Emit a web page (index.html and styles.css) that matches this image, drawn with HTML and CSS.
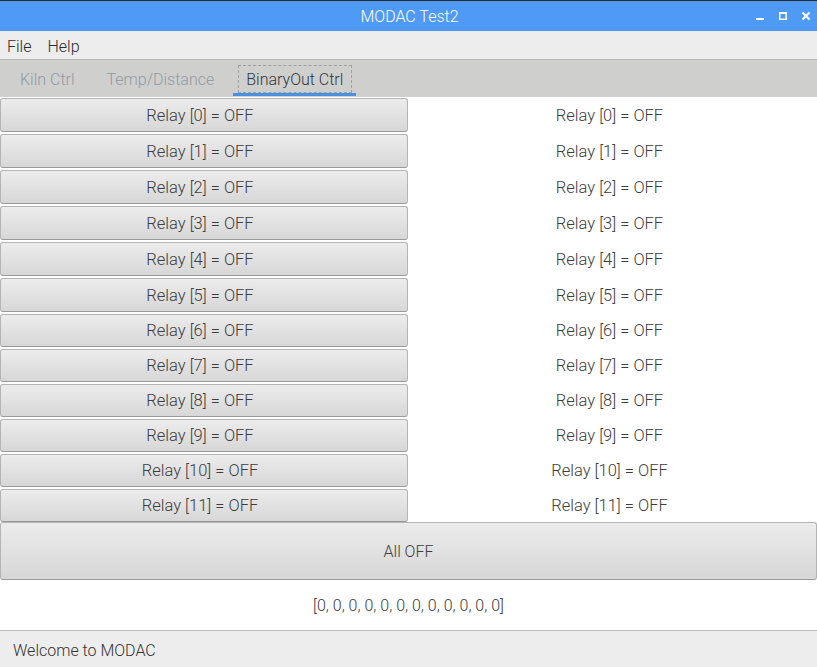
FILE: index.html
```html
<!DOCTYPE html>
<html>
<head>
<meta charset="utf-8">
<link rel="stylesheet" href="styles.css">
</head>
<body>
<div class="window">
  <div class="titlebar">
    <span class="title">MODAC Test2</span>
    <div class="controls">
      <svg class="ctl" width="10" height="10" viewBox="0 0 10 10"><rect x="1" y="7" width="8" height="2" fill="#fff"/></svg>
      <svg class="ctl" width="10" height="10" viewBox="0 0 10 10"><rect x="1.75" y="1.75" width="6.5" height="6.5" fill="none" stroke="#fff" stroke-width="1.5"/><rect x="1" y="1" width="8" height="2" fill="#fff"/></svg>
      <svg class="ctl" width="10" height="10" viewBox="0 0 10 10"><path d="M1.5 1.5 L8.5 8.5 M8.5 1.5 L1.5 8.5" stroke="#fff" stroke-width="2"/></svg>
    </div>
  </div>
  <div class="menubar">
    <span class="menu-item">File</span>
    <span class="menu-item">Help</span>
  </div>
  <div class="tabbar">
    <span class="tab">Kiln Ctrl</span>
    <span class="tab">Temp/Distance</span>
    <span class="tab active"><span class="focus">BinaryOut Ctrl</span></span>
  </div>
  <div class="grid">
    <div class="row tall"><button class="btn">Relay [0] = OFF</button><span class="lbl">Relay [0] = OFF</span></div>
    <div class="row tall"><button class="btn">Relay [1] = OFF</button><span class="lbl">Relay [1] = OFF</span></div>
    <div class="row tall"><button class="btn">Relay [2] = OFF</button><span class="lbl">Relay [2] = OFF</span></div>
    <div class="row tall"><button class="btn">Relay [3] = OFF</button><span class="lbl">Relay [3] = OFF</span></div>
    <div class="row tall"><button class="btn">Relay [4] = OFF</button><span class="lbl">Relay [4] = OFF</span></div>
    <div class="row tall"><button class="btn">Relay [5] = OFF</button><span class="lbl">Relay [5] = OFF</span></div>
    <div class="row"><button class="btn">Relay [6] = OFF</button><span class="lbl">Relay [6] = OFF</span></div>
    <div class="row"><button class="btn">Relay [7] = OFF</button><span class="lbl">Relay [7] = OFF</span></div>
    <div class="row"><button class="btn">Relay [8] = OFF</button><span class="lbl">Relay [8] = OFF</span></div>
    <div class="row"><button class="btn">Relay [9] = OFF</button><span class="lbl">Relay [9] = OFF</span></div>
    <div class="row"><button class="btn">Relay [10] = OFF</button><span class="lbl">Relay [10] = OFF</span></div>
    <div class="row last"><button class="btn">Relay [11] = OFF</button><span class="lbl">Relay [11] = OFF</span></div>
  </div>
  <button class="btn alloff">All OFF</button>
  <div class="array">[0, 0, 0, 0, 0, 0, 0, 0, 0, 0, 0, 0]</div>
  <div class="status">Welcome to MODAC</div>
</div>
</body>
</html>
```

FILE: styles.css
```css
* { box-sizing: border-box; }
html, body { margin: 0; padding: 0; }
body {
  width: 817px;
  height: 667px;
  overflow: hidden;
  background: #ffffff;
  font-family: Roboto, "Liberation Sans", sans-serif;
  font-weight: 300;
  color: #3a3a3a;
}
.window {
  display: flex;
  flex-direction: column;
  height: 667px;
}
.titlebar {
  height: 31px;
  flex: none;
  border-top: 1px solid #2b2b2b;
  background: #4f9af5;
  display: flex;
  align-items: center;
  justify-content: center;
  position: relative;
}
.title {
  color: #ffffff;
  font-size: 16px;
  font-weight: 300;
  padding-top: 1px;
  padding-left: 2px;
}
.controls {
  position: absolute;
  right: 6px;
  top: 10px;
  display: flex;
  gap: 13px;
}
.ctl { display: block; }
.menubar {
  height: 29px;
  flex: none;
  background: #ededed;
  border-bottom: 1px solid #b9b9b9;
  display: flex;
  align-items: center;
  padding-left: 7px;
  padding-top: 2px;
  gap: 16px;
  font-size: 16px;
  color: #2a2a2a;
}
.tabbar {
  height: 37px;
  flex: none;
  background: #cfcfcd;
  display: flex;
  align-items: stretch;
  padding-left: 20px;
  font-size: 16px;
}
.tab {
  color: #8f9ba6;
  display: flex;
  align-items: center;
  margin-right: 32px;
  padding-top: 1px;
}
.tab.active {
  margin-left: -13px;
  border-bottom: 3px solid #4a90e2;
  padding: 5px 4px 0 5px;
  align-items: flex-start;
  height: 36px;
}
.focus {
  color: #2e3842;
  border: 1px dashed #a0a0a0;
  padding: 0 8px 0 7px;
  height: 28px;
  display: flex;
  align-items: center;
}
.grid {
  display: flex;
  flex-direction: column;
  flex: none;
}
.row {
  height: 35px;
  display: grid;
  grid-template-columns: 408px 1fr;
  padding: 1px 0;
}
.row.tall { height: 36px; }
.row.last { height: 34px; padding-bottom: 0; }
.btn {
  font-family: Roboto, "Liberation Sans", sans-serif;
  font-weight: 300;
  font-size: 16.5px;
  color: #3c3c3c;
  background: linear-gradient(#ececec, #d7d7d7);
  border: 1px solid #b4b4b4;
  border-bottom-color: #9a9a9a;
  border-radius: 3px;
  margin: 0;
  padding: 0 8px 0 0;
  height: 100%;
}
.lbl {
  display: flex;
  align-items: center;
  justify-content: center;
  font-size: 16.5px;
  color: #3c3c3c;
  padding-right: 6px;
}
.alloff {
  height: 58px;
  width: 817px;
  flex: none;
  font-size: 16px;
  padding: 0;
}
.array {
  height: 50px;
  flex: none;
  display: flex;
  align-items: center;
  justify-content: center;
  font-size: 16px;
  color: #3c3c3c;
}
.status {
  flex: 1;
  background: #ededed;
  border-top: 1px solid #b9b9b9;
  display: flex;
  align-items: center;
  padding-left: 13px;
  padding-top: 3px;
  font-size: 16px;
  color: #333;
}
```
